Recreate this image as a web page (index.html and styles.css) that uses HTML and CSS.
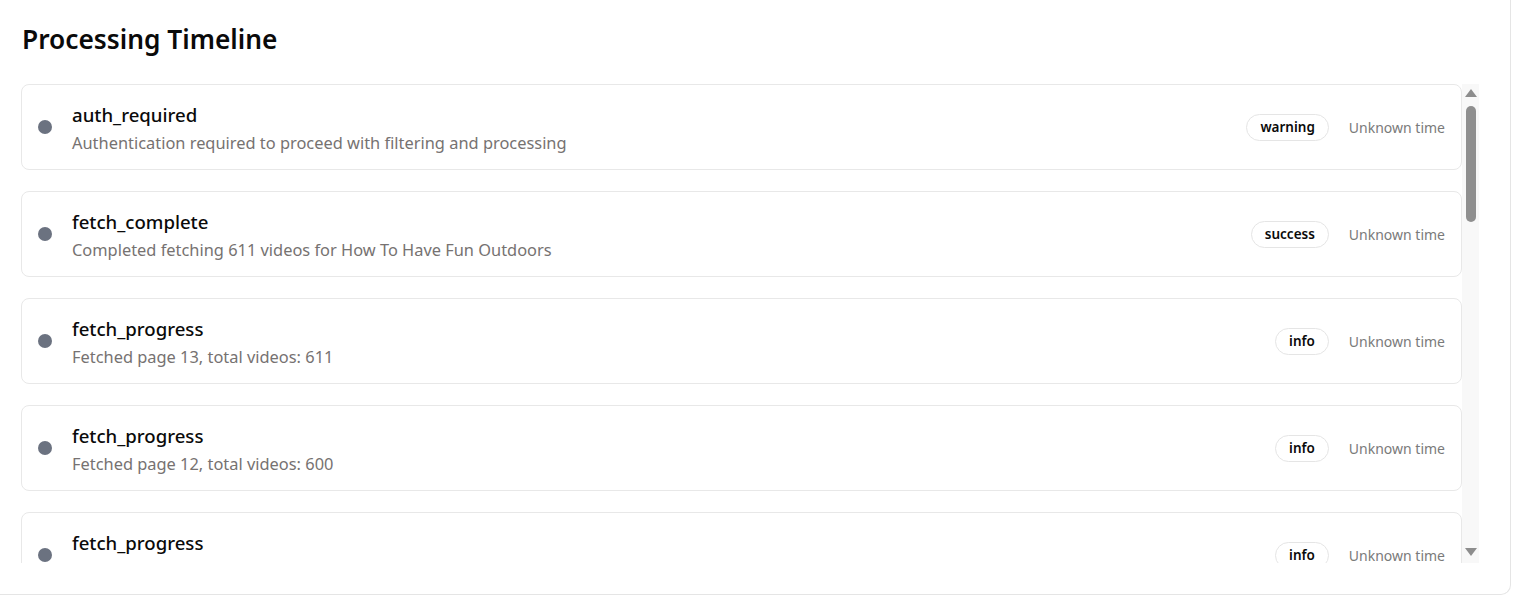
FILE: index.html
```html
<!DOCTYPE html>
<html lang="en">
<head>
<meta charset="utf-8">
<title>Processing Timeline</title>
<link rel="stylesheet" href="styles.css">
</head>
<body>
<section class="card">
  <h2 class="card-title">Processing Timeline</h2>
  <div class="timeline-wrap">
    <div class="timeline">
      <div class="event">
        <span class="dot"></span>
        <div class="event-body">
          <div class="event-name">auth_required</div>
          <div class="event-desc">Authentication required to proceed with filtering and processing</div>
        </div>
        <div class="event-meta">
          <span class="badge">warning</span>
          <span class="time">Unknown time</span>
        </div>
      </div>
      <div class="event">
        <span class="dot"></span>
        <div class="event-body">
          <div class="event-name">fetch_complete</div>
          <div class="event-desc">Completed fetching 611 videos for How To Have Fun Outdoors</div>
        </div>
        <div class="event-meta">
          <span class="badge">success</span>
          <span class="time">Unknown time</span>
        </div>
      </div>
      <div class="event">
        <span class="dot"></span>
        <div class="event-body">
          <div class="event-name">fetch_progress</div>
          <div class="event-desc">Fetched page 13, total videos: 611</div>
        </div>
        <div class="event-meta">
          <span class="badge">info</span>
          <span class="time">Unknown time</span>
        </div>
      </div>
      <div class="event">
        <span class="dot"></span>
        <div class="event-body">
          <div class="event-name">fetch_progress</div>
          <div class="event-desc">Fetched page 12, total videos: 600</div>
        </div>
        <div class="event-meta">
          <span class="badge">info</span>
          <span class="time">Unknown time</span>
        </div>
      </div>
      <div class="event">
        <span class="dot"></span>
        <div class="event-body">
          <div class="event-name">fetch_progress</div>
          <div class="event-desc">Fetched page 11, total videos: 550</div>
        </div>
        <div class="event-meta">
          <span class="badge">info</span>
          <span class="time">Unknown time</span>
        </div>
      </div>
    </div>
    <div class="scrollbar" aria-hidden="true">
      <span class="arrow-up"></span>
      <span class="thumb"></span>
      <span class="arrow-down"></span>
    </div>
  </div>
</section>
</body>
</html>
```
FILE: styles.css
```css
* { box-sizing: border-box; }

html, body {
  margin: 0;
  padding: 0;
  background: #ffffff;
}

body {
  font-family: "Noto Sans", "Open Sans", Arial, sans-serif;
  color: #111111;
}

.card {
  width: 1511px;
  height: 595px;
  background: #fff;
  border-right: 1px solid #e5e5e5;
  border-bottom: 1px solid #e5e5e5;
  border-bottom-right-radius: 10px;
  padding: 18px 31px 0 21px;
}

.card-title {
  margin: 0 0 24px 1px;
  font-size: 26.3px;
  line-height: 42px;
  font-weight: 600;
  color: #0a0a0a;
}

.timeline-wrap {
  display: flex;
  height: 479px;
}

.timeline {
  flex: 1;
  min-width: 0;
  overflow-y: auto;
  scrollbar-width: none;
  display: flex;
  flex-direction: column;
  gap: 21px;
}

.scrollbar {
  flex: none;
  width: 17px;
  background: #f8f8f8;
  display: flex;
  flex-direction: column;
  align-items: center;
}

.arrow-up {
  margin-top: 5px;
  width: 0;
  height: 0;
  border-left: 6px solid transparent;
  border-right: 6px solid transparent;
  border-bottom: 8px solid #8d8d8d;
}

.thumb {
  margin-top: 9px;
  width: 10px;
  height: 116px;
  border-radius: 5px;
  background: #8f8f8f;
}

.arrow-down {
  margin-top: auto;
  margin-bottom: 7px;
  width: 0;
  height: 0;
  border-left: 6px solid transparent;
  border-right: 6px solid transparent;
  border-top: 8px solid #8d8d8d;
}

.event {
  flex: none;
  display: flex;
  align-items: center;
  gap: 20px;
  height: 86px;
  padding: 0 16px;
  border: 1px solid #e8e8e8;
  border-radius: 8px;
  background: #fff;
}

.dot {
  flex: none;
  width: 14px;
  height: 14px;
  border-radius: 50%;
  background: #6b7280;
}

.event-body {
  flex: 1;
  min-width: 0;
  padding-top: 2px;
}

.event-name {
  font-size: 18.6px;
  line-height: 28px;
  font-weight: 500;
  color: #0a0a0a;
}

.event-desc {
  padding-top: 2px;
  font-size: 16.4px;
  line-height: 24px;
  color: #767271;
}

.event-meta {
  flex: none;
  display: flex;
  align-items: center;
  gap: 20px;
}

.badge {
  display: inline-flex;
  align-items: center;
  height: 27px;
  padding: 0 13px;
  border: 1px solid #e5e5e5;
  border-radius: 999px;
  font-size: 13.5px;
  font-weight: 600;
  color: #0a0a0a;
}

.time {
  font-size: 14px;
  color: #7a7a7a;
}
```
